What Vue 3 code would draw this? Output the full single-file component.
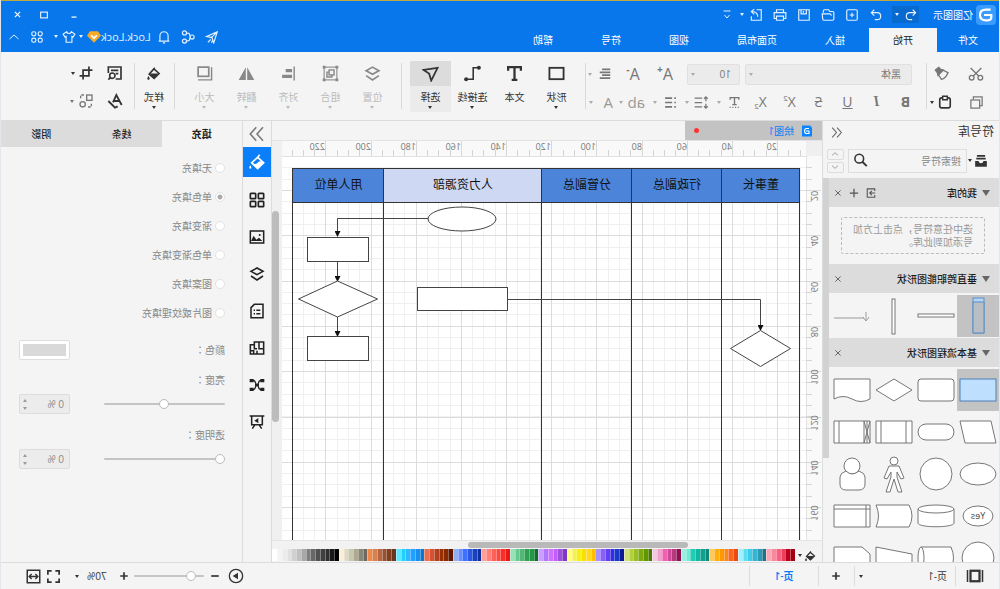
<script setup>
import { h, ref } from 'vue'

const icons = {
  logo: '<path d="M5 4h7c6 0 9 3.500 9 8s-3 8-9 8H9c-3 0-5-2-5-5v-3h11" fill="none" stroke="#fff" stroke-width="3.200"/>',
  undo: '<path d="M9 3L4 8l5 5M4 8h10a6 6 0 0 1 0 12h-4"/>',
  redo: '<path d="M15 3l5 5-5 5M20 8H10a6 6 0 0 0 0 12h4"/>',
  newdoc: '<rect x="3" y="3" width="18" height="18" rx="2"/><path d="M12 8v8M8 12h8"/>',
  open: '<path d="M20 8V5q0-2-2-2h-7L9 6H4q-2 0-2 2v11q0 2 2 2h15q2 0 2-2l1-9H9q-2 0-3 3"/>',
  save: '<path d="M3 3h18v18H3zM8 3v7h9V3M13 5v3"/>',
  print: '<path d="M6 8V3h12v5M6 18H2V8h20v10h-4M6 14h12v7H6z"/>',
  exportdoc: '<path d="M11 3H3v18h17v-7M9 15c0-7 4-9 11-9M15 2l5 4-5 5"/>',
  more: '<path d="M5 4h14M7 12l5 6 5-6"/>',
  min: '<path d="M6 17h12" stroke-width="3"/>',
  max: '<rect x="4" y="5" width="16" height="14" stroke-width="2.500"/>',
  close: '<path d="M5 5l14 14M19 5L5 19" stroke-width="3"/>',
  send: '<path d="M3 3l18 8-9 2-3 9zM4 4l9 9M14 16l5 5M11 18l2 4"/>',
  share: '<circle cx="5" cy="12" r="3.500"/><circle cx="18" cy="5" r="3.500"/><circle cx="18" cy="19" r="3.500"/><path d="M8 11l2-5 5-1M8 13l2 5 5 1"/>',
  bell: '<path d="M3 19h18M5 19V10a7 7 0 0 1 14 0v9M10 22h4"/>',
  diamond: '<path d="M5 2h14l5 8-12 12L0 10z" fill="#f7a928" stroke="none"/><path d="M7 9l5 5 5-5" stroke="#fff" stroke-width="3"/>',
  shirt: '<path d="M8 3c1 4 7 4 8 0l6 4-3 5-2-1v10H7V11l-2 1-3-5z"/>',
  apps: '<rect x="3" y="3" width="7" height="7" rx="3"/><rect x="14" y="3" width="7" height="7" rx="3"/><rect x="3" y="14" width="7" height="7" rx="3"/><rect x="14" y="14" width="7" height="7" rx="3"/>',
  up: '<path d="M3 16l9-8 9 8"/>',
  down: '<path d="M3 8l9 8 9-8"/>',
  cut: '<circle cx="5.500" cy="17.500" r="3.500"/><circle cx="18.500" cy="17.500" r="3.500"/><path d="M4 3l12 12M20 3L8 15"/>',
  painter: '<path d="M3 10l8-4 7 6-5 8c-4-1-8-5-10-10z"/><path d="M10 6l8 8 1-4 3-4-5-4-3 3z" fill="currentColor"/>',
  copy: '<path d="M17 7V3H3v14h4"/><rect x="7" y="8" width="14" height="13"/>',
  paste: '<rect x="3" y="5" width="18" height="17" rx="3" stroke-width="2.800"/><path d="M8 2h8v6H8z" fill="#f4f4f4" stroke-width="2.500"/>',
  align: '<path d="M3 4h14M3 9h18M3 14h14M3 19h18" stroke-width="3"/>',
  textdir: '<path d="M4 7V3h16v4M12 3v13M8 16h8M4 21h2M9 21h2M14 21h2M19 21h2" stroke-width="2.500"/>',
  spacing: '<path d="M11 5h12M11 12h12M11 19h12M5 3v7M5 14v7M2 6l3-3 3 3M2 18l3 3 3-3"/>',
  list: '<path d="M9 4h13M9 12h13M9 20h13M2 4h3M2 12h3M2 20h3" stroke-width="3"/>',
  rect: '<rect x="2" y="4" width="20" height="16" stroke-width="2.600"/>',
  text: '<path d="M3 8V3h18v5M12 3v18M8 21h8" stroke-width="3.200"/>',
  connector: '<path d="M3 4h8v16h9" stroke-width="2.200"/><circle cx="3" cy="4" r="2.800" fill="currentColor" stroke="none"/><circle cx="21" cy="20" r="2.800" fill="currentColor" stroke="none"/>',
  pointer: '<path d="M2 4l20 3-8 5-3 10z" stroke-width="2.500"/>',
  layers: '<path d="M12 3l9 5-9 5-9-5zM3 15l9 6 9-6" stroke-width="2.400"/>',
  group: '<rect x="3" y="3" width="18" height="18" stroke-width="1.500"/><rect x="7" y="7" width="7" height="7"/><path d="M10 14v3h7v-7h-3"/><path d="M1 1h4v4H1zM19 1h4v4h-4zM1 19h4v4H1zM19 19h4v4h-4z" fill="currentColor" stroke="none"/>',
  alignobj: '<path d="M4 2v20" stroke-width="2"/><path d="M7 8h9M7 16h14" stroke-width="4.500"/>',
  flip: '<path d="M11 3v18H1zM13 3v18h10z" fill="currentColor" stroke="none"/>',
  size: '<rect x="6" y="3" width="15" height="13" stroke-width="2.400"/><path d="M2 3v18h19" stroke-width="2"/>',
  bucket: '<path d="M10 3l9 10-8 7-8-8 8-7" stroke-width="2.500"/><path d="M4 12h15l-8 8zM20 16c3 4 2 6 0 6s-3-2 0-6z" fill="currentColor" stroke="none"/>',
  findrep: '<path d="M22 12V3H3v18h8M7 8h11M7 13h4" stroke-width="2.500"/><circle cx="16" cy="16" r="4" stroke-width="2.400"/><path d="M19 19l3 3" stroke-width="2.500"/>',
  textstyle: '<path d="M2 18L10 3l5 11M6 12h8M8 20l4 2 10-10" stroke-width="2.700"/>',
  crop: '<path d="M7 1v16h16M1 7h16v16" stroke-width="2.900"/>',
  replace: '<rect x="3" y="3" width="8" height="8"/><circle cx="17" cy="17" r="4"/><path d="M15 3h5v6M9 21H4v-6" stroke-dasharray="4 2"/>',
  chevl: '<path d="M11 3l-8 9 8 9M20 3l-8 9 8 9"/>',
  chevr: '<path d="M4 3l8 9-8 9M13 3l8 9-8 9"/>',
  drawer: '<path d="M2 12h6c0 5 8 5 8 0h6v10H2z" fill="currentColor" stroke="none"/><path d="M5 3h14M4 8h16" stroke-width="3"/>',
  search: '<circle cx="14" cy="9" r="7" stroke-width="2.500"/><path d="M9 14l-7 7" stroke-width="3"/>',
  importlib: '<path d="M3 7V2h18v20H3v-5M2 12h12M10 7l5 5-5 5" stroke-width="2.600"/>',
  plus: '<path d="M12 2v20M2 12h20" stroke-width="3"/>',
  plusbold: '<path d="M12 3v18M3 12h18" stroke-width="4"/>',
  minus: '<path d="M3 12h18" stroke-width="4"/>',
  x: '<path d="M4 4l16 16M20 4L4 20" stroke-width="2.600"/>',
  fill: '<path d="M11 5l9 8-9 9-9-9 9-8-3-4" stroke-width="2.500"/><path d="M2 13q5-4 9 0t9 0l-9 9zM22 17c2 3 2 5 0 5s-2-2 0-5z" fill="currentColor" stroke="none"/>',
  grid: '<g stroke-width="2.500"><rect x="2" y="2" width="8" height="8" rx="1"/><rect x="14" y="2" width="8" height="8" rx="1"/><rect x="2" y="14" width="8" height="8" rx="1"/><rect x="14" y="14" width="8" height="8" rx="1"/></g>',
  image: '<rect x="2" y="3" width="20" height="18" stroke-width="2.300"/><path d="M4 18l5-5 4 3 4-6 4 8z" fill="currentColor" stroke="none"/><circle cx="8" cy="9" r="1.500" fill="currentColor" stroke="none"/>',
  page: '<path d="M3 2h13l5 5v15H3zM7 11h6M15 11h2M7 16h6M15 16h2" stroke-width="2.300"/>',
  plan: '<path d="M2 3h14v4h6v14H2zM2 13h7V3M16 7v6h-4M12 21v-5M17 21v-5h5" stroke-width="2.300"/>',
  mind: '<path d="M6 5c5 0 3 7 6 7s1-7 6-7M6 19c5 0 3-7 6-7s1 7 6 7" stroke-width="2"/><path d="M1 3h6v5H1zM17 3h6v5h-6zM1 16h6v5H1zM17 16h6v5h-6zM9 10h6v4H9z" fill="currentColor" stroke="none"/>',
  board: '<path d="M1 3h22M4 3v13h16V3M9 16l-4 6M15 16l4 6" stroke-width="2.300"/><path d="M10 6l6 4-6 4z" fill="currentColor" stroke="none"/>',
  pages: '<rect x="6" y="5" width="12" height="14" stroke-width="3"/><path d="M2 4v16M22 4v16" stroke-width="2"/>',
  play: '<circle cx="12" cy="12" r="10"/><path d="M9 7l8 5-8 5z" fill="currentColor" stroke="none"/>',
  full: '<path d="M3 9V3h6M15 3h6v6M21 15v6h-6M9 21H3v-6" stroke-width="2.800"/>',
  fit: '<rect x="2" y="2" width="20" height="20" stroke-width="2.400"/><path d="M6 12h12M9 8l-4 4 4 4M15 8l4 4-4 4" stroke-width="2.200"/>',
  doc: '<path d="M6 1h16v22H2V5z" fill="#0a84ff" stroke="none"/><path d="M8 7h5c5 0 5 10 0 10H8v-5h6" stroke="#fff" stroke-width="2.300"/>',
}
const Icon = (p) =>
  h('svg', {
    viewBox: '0 0 24 24', width: p.size || 14, height: p.size || 14, fill: 'none',
    stroke: 'currentColor', 'stroke-width': 2, 'aria-hidden': 'true', innerHTML: icons[p.name],
  })
Icon.props = ['name', 'size']

const tabs = ['文件', '开始', '插入', '页面布局', '视图', '符号', '帮助']
const quick = ['redo', 'newdoc', 'open', 'save', 'print', 'exportdoc']
const tools = [
  { t: '形状', i: 'rect', c: true }, { t: '文本', i: 'text' },
  { t: '连接线', i: 'connector', c: true }, { t: '选择', i: 'pointer', c: true, on: true },
]
const arrange = [
  { t: '位置', i: 'layers' }, { t: '组合', i: 'group' }, { t: '对齐', i: 'alignobj' },
  { t: '翻转', i: 'flip' }, { t: '大小', i: 'size' },
]
const laneShapes = [
  '<rect x="15" y="3" width="11" height="35" fill="#b4d4f5" stroke="#5b8fc4"/><path d="M15 7h11v31H15z" fill="#b9bec5" stroke="#5b8fc4"/>',
  '<rect x="3" y="19" width="36" height="3"/>',
  '<rect x="20" y="4" width="3" height="35"/>',
  '<path d="M9 23h30M7 17v8M4 22l3 4 3-4" stroke="#999"/>',
]
const flowShapes = [
  '<rect x="3" y="10" width="36" height="22" fill="#bfdfff" stroke="#4c7fb4"/>',
  '<rect x="3" y="10" width="36" height="22" rx="3"/>',
  '<path d="M21 10l18 11-18 11L3 21z"/>',
  '<path d="M3 10h36v20q-9-5-18 0t-18 0z"/>',
  '<path d="M8 10h31l-5 22H3z"/>',
  '<rect x="3" y="13" width="36" height="16" rx="8"/>',
  '<path d="M3 10h36v22H3zM9 10v22M34 10v22"/>',
  '<path d="M3 10h36v22H3zM9 10v22M34 10v22M3 10l6 22M9 10L3 32M6 10v22"/>',
  '<ellipse cx="21" cy="21" rx="18" ry="11"/>',
  '<circle cx="21" cy="21" r="16"/>',
  '<circle cx="21" cy="8" r="4"/><path d="M16 13h10l5 12-3 1-4-7v5l5 15h-4l-4-13-4 13h-4l5-15v-5l-4 7-3-1z"/>',
  '<circle cx="21" cy="13" r="8"/><path d="M14 18q-6 2-6 6v7q0 6 6 6h13q6 0 6-6v-7q0-4-6-6-6 6-13 0z"/>',
  '<ellipse cx="21" cy="21" rx="15" ry="10"/><text x="21" y="24">Yes</text>',
  '<path d="M3 14v14c0 5 36 5 36 0V14"/><ellipse cx="21" cy="14" rx="18" ry="4"/>',
  '<path d="M6 10h33q-5 11 0 22H6q-6-11 0-22z"/>',
  '<path d="M3 10h36v22H3zM3 14h36M7 10v22"/>',
  '<circle cx="21" cy="21" r="16"/>',
  '<path d="M36 10H6q-5 11 0 22h30"/><ellipse cx="36" cy="21" rx="3" ry="11"/>',
  '<path d="M3 17l36-7v22H3z"/>',
  '<path d="M11 10h28v22H3V17z"/>',
]
const lanes = [
  { t: '董事长', x: 200, w: 78 }, { t: '行政副总', x: 278, w: 90 }, { t: '分管副总', x: 368, w: 90 },
  { t: '人力资源部', x: 458, w: 158, light: true }, { t: '用人单位', x: 616, w: 91 },
]
const majors = Array.from({ length: 11 }, (_, i) => ({ n: (i + 1) * 20, x: 222 + Math.round(i * 45.15), y: 190 + Math.round(i * 45.3) }))
const minorX = Array.from({ length: 47 }, (_, i) => Math.round(199.4 + i * 11.29))
const minorY = Array.from({ length: 34 }, (_, i) => Math.round(167.3 + i * 11.32))
const palette = (
  'a3000f c00020 e84058 f76080 f8889c faa8b8 1b7488 2a9ab8 38b4d0 40cce8 60dcf0 a0f0ff f04810 f86820 f88818 ff9800 ffae10 ffc860 ' +
  '0e8878 0fa090 10b8a0 20ccb4 70ead4 98f0e0 901050 b83880 d04898 f060b0 f0a0cc f4c8e0 507800 609800 80a810 98c020 b0d040 d0e080 ' +
  '0c1898 1838c8 3828e8 6040f0 8860f8 a890ff ffc000 ffd820 f8e000 f4f020 f8f050 ffff80 8038c8 a050e0 c060f8 d070ff b078f8 c8a0ff ' +
  '107028 209848 30a050 50b878 68c890 98e0b8 e81818 f83028 ff4840 ff6058 ff8078 ffa098 1030a0 1840c0 2858e8 4070ff 6890ff 90b0f0 ' +
  '601800 882800 983000 b04020 d85030 e87050 0878d0 1890f0 20a0ff 30b8ff 20d0ff 60e8ff 683820 804020 985030 b86840 d88050 f08848 ' +
  '706860 888878 b0a890 c8c8b0 e0d8c0 f8f0d8 000000 181818 303030 404040 505050 686868 808080 a8a8a8 c0c0c0 d0d0d0 e0e0e0 ececec f4f4f4 ffffff'
).split(' ')
const rail = ['fill', 'grid', 'image', 'layers', 'page', 'plan', 'mind', 'board']
const fills = ['无填充', '单色填充', '渐变填充', '单色渐变填充', '图案填充', '图片或纹理填充']
const fillMode = ref('单色填充')
const brightness = ref(50)
const opacity = ref(0)
const zoom = ref(13)
</script>

<template>
  <div class="app">
    <header class="top">
      <div class="titlebar">
        <span class="logo"><Icon name="logo" size="16" /></span>
        <span class="name">亿图图示</span>
        <button class="undo" aria-label="撤销"><Icon name="undo" size="14" /><i class="caret"></i></button>
        <button v-for="q in quick" :key="q" class="quick" :aria-label="q"><Icon :name="q" size="14" /></button>
        <i class="caret"></i>
        <button class="quick more" aria-label="更多"><Icon name="more" size="12" /></button>
        <span class="grow"></span>
        <button class="win" aria-label="最小化"><Icon name="min" size="10" /></button>
        <button class="win" aria-label="最大化"><Icon name="max" size="10" /></button>
        <button class="win" aria-label="关闭"><Icon name="close" size="9" /></button>
      </div>
      <div class="tabbar">
        <nav>
          <button v-for="(t, i) in tabs" :key="t" class="tab" :class="{ first: i === 0, on: i === 1 }">{{ t }}</button>
        </nav>
        <div class="account">
          <button aria-label="发送"><Icon name="send" size="14" /></button>
          <button aria-label="分享"><Icon name="share" size="14" /></button>
          <button aria-label="通知"><Icon name="bell" size="14" /></button>
          <button class="user"><span>Lock.Lock</span><Icon name="diamond" size="14" /><i class="caret"></i></button>
          <button aria-label="主题" class="skin"><Icon name="shirt" size="14" /><i class="caret"></i></button>
          <button aria-label="应用"><Icon name="apps" size="14" /></button>
          <button aria-label="收起"><Icon name="up" size="12" /></button>
        </div>
      </div>
    </header>

    <section class="ribbon">
      <div class="grp clip">
        <button class="ic" aria-label="剪切"><Icon name="cut" size="16" /></button>
        <button class="ic" aria-label="格式刷"><Icon name="painter" size="16" /></button>
        <button class="ic" aria-label="复制"><Icon name="copy" size="15" /></button>
        <button class="ic dark" aria-label="粘贴"><Icon name="paste" size="14" /><i class="caret"></i></button>
      </div>
      <div class="grp font">
        <div class="frow one">
          <span class="sel family"><select aria-label="字体"><option>黑体</option></select><i class="caret"></i></span>
          <span class="sel num"><select aria-label="字号"><option>10</option></select><i class="caret"></i></span>
          <button class="c32 glyph" aria-label="增大字号">A<sup>+</sup></button>
          <button class="c32 glyph" aria-label="减小字号">A<sup>-</sup></button>
          <button class="cc" aria-label="对齐"><Icon name="align" size="14" /><i class="caret"></i></button>
        </div>
        <div class="frow">
          <button class="c29"><b>B</b></button>
          <button class="c29"><em>I</em></button>
          <button class="c29"><u>U</u></button>
          <button class="c29"><s>S</s></button>
          <button class="c29">X<sup>2</sup></button>
          <button class="c29">X<sub>2</sub></button>
          <button class="cc" aria-label="文字方向"><Icon name="textdir" size="13" /><i class="caret"></i></button>
          <button class="cc" aria-label="行距"><Icon name="spacing" size="15" /><i class="caret"></i></button>
          <button class="cc" aria-label="列表"><Icon name="list" size="13" /><i class="caret"></i></button>
          <button class="cc light"><span>ab</span><i class="caret"></i></button>
          <button class="cc light"><span>A</span><i class="caret"></i></button>
        </div>
      </div>
      <div class="grp bigs">
        <button v-for="b in tools" :key="b.t" class="big" :class="{ on: b.on }">
          <span class="pic"><Icon :name="b.i" size="17" /></span><span class="lbl">{{ b.t }}</span><i v-if="b.c" class="caret"></i>
        </button>
      </div>
      <div class="grp bigs off">
        <button v-for="b in arrange" :key="b.t" class="big">
          <span class="pic"><Icon :name="b.i" size="17" /></span><span class="lbl">{{ b.t }}</span><i class="caret"></i>
        </button>
      </div>
      <div class="grp style">
        <button class="big"><span class="pic"><Icon name="bucket" size="15" /></span><span class="lbl">样式</span><i class="caret"></i></button>
      </div>
      <div class="misc">
        <button class="ic dark" aria-label="查找"><Icon name="findrep" size="16" /></button>
        <button class="ic dark" aria-label="裁剪"><Icon name="crop" size="14" /><i class="caret"></i></button>
        <button class="ic dark" aria-label="文本样式"><Icon name="textstyle" size="16" /></button>
        <button class="ic" aria-label="替换"><Icon name="replace" size="16" /><i class="caret"></i></button>
      </div>
    </section>

    <main>
      <aside class="library">
        <div class="libhead"><h2>符号库</h2><button aria-label="收起"><Icon name="chevl" size="13" /></button></div>
        <div class="searchrow">
          <button class="drawer" aria-label="库"><Icon name="drawer" size="14" /><i class="caret"></i></button>
          <label class="searchbox"><input type="text" placeholder="搜索符号" aria-label="搜索符号" /><Icon name="search" size="15" /></label>
          <span class="updown">
            <button aria-label="上"><Icon name="up" size="8" /></button>
            <button aria-label="下"><Icon name="down" size="8" /></button>
          </span>
        </div>
        <div class="libbody">
          <div class="sections">
            <div class="sec"><i class="tri"></i><h3>我的库</h3><Icon name="importlib" size="10" /><Icon name="plus" size="10" /><Icon name="x" size="8" /></div>
            <div class="drop"><p>选中任意符号，点击上方加号添加到此库。</p></div>
            <div class="sec"><i class="tri"></i><h3>垂直跨职能图形状</h3><Icon name="x" size="8" /></div>
            <div class="cells">
              <svg v-for="(s, i) in laneShapes" :key="i" class="cell" :class="{ on: i === 0 }" viewBox="0 0 42 42" v-html="s"></svg>
            </div>
            <div class="sec"><i class="tri"></i><h3>基本流程图形状</h3><Icon name="x" size="8" /></div>
            <div class="cells">
              <svg v-for="(s, i) in flowShapes" :key="i" class="cell" :class="{ on: i === 0 }" viewBox="0 0 42 42" v-html="s"></svg>
            </div>
          </div>
          <div class="libscroll"></div>
        </div>
      </aside>

      <section class="work">
        <div class="docs"><button class="doctab"><Icon name="doc" size="12" /><span>绘图1</span><i class="dot"></i></button></div>
        <div class="stage">
          <svg class="canvas" width="100%" height="100%">
            <defs>
              <marker id="tip" markerWidth="6" markerHeight="6" refX="5" refY="3" orient="auto" markerUnits="userSpaceOnUse">
                <path d="M0 0l6 3-6 3z" fill="#111" />
              </marker>
            </defs>
            <g transform="translate(-178 -141)" shape-rendering="crispEdges">
              <path v-for="x in minorX" :key="'a' + x" :d="`M${x}.5 168V540`" stroke="#f0f0f0" />
              <path v-for="y in minorY" :key="'b' + y" :d="`M194 ${y}.5H720`" stroke="#f0f0f0" />
              <path v-for="m in majors" :key="'c' + m.n" :d="`M${m.x}.5 168V540M194 ${m.y}.5H720`" stroke="#dcdcdc" />
              <path d="M178 141H720V156H194V540H178z" fill="#f9f9f9" />
              <path d="M178 141h16v15h-16z" fill="#efefef" />
              <path d="M194 156.500H720M193.500 156V540" stroke="#e2e2e2" />
              <path v-for="x in minorX" :key="'d' + x" :d="`M${x}.5 150V156`" stroke="#d4d4d4" />
              <path v-for="y in minorY" :key="'e' + y" :d="`M188 ${y}.5H194`" stroke="#d4d4d4" />
              <path v-for="m in majors" :key="'f' + m.n" :d="`M${m.x}.5 141V156M179 ${m.y}.5H194`" stroke="#d8d8d8" />
            </g>
            <g transform="translate(-178 -141)">
              <text v-for="m in majors" :key="'g' + m.n" class="rule" :x="m.x + 1" y="150">{{ m.n }}</text>
              <text v-for="m in majors.slice(0, 8)" :key="'h' + m.n" class="rule mid" :transform="`translate(189 ${m.y + 6}) rotate(-90)`">{{ m.n }}</text>
              <g shape-rendering="crispEdges" stroke="#333" fill="none">
                <g v-for="l in lanes" :key="l.t">
                  <rect :x="l.x + 0.5" y="168.500" :width="l.w" height="34" :fill="l.light ? '#ced8f3' : '#4b84d9'" />
                  <path :d="`M${l.x}.5 202V540M${l.x + l.w}.5 202V540`" />
                </g>
              </g>
              <text v-for="l in lanes" :key="l.t" class="lane" :x="l.x + l.w / 2" y="189">{{ l.t }}</text>
              <g fill="#fff" stroke="#444">
                <path d="M572 218.500H662.500V236" fill="none" marker-end="url(#tip)" />
                <path d="M662.500 262V281" marker-end="url(#tip)" />
                <path d="M662.500 317V336" marker-end="url(#tip)" />
                <path d="M493 299.500H239.500V330" fill="none" marker-end="url(#tip)" />
                <ellipse cx="538" cy="219" rx="34" ry="12" />
                <rect x="631.500" y="237.500" width="61" height="24" />
                <path d="M662.500 281l39 18-39 18-40-18z" />
                <rect x="631.500" y="336.500" width="61" height="24" />
                <rect x="492.500" y="287.500" width="90" height="23" />
                <path d="M239.500 330.500l30 18-30 18-30-18z" />
              </g>
            </g>
          </svg>
          <div class="vbar"><i></i></div>
        </div>
        <div class="hbar"><i></i></div>
        <div class="palette">
          <button class="pbtn" aria-label="填充颜色"><Icon name="bucket" size="12" /><i class="caret"></i></button>
          <div class="strips"><i v-for="(c, i) in palette" :key="i" :style="{ background: '#' + c }"></i></div>
        </div>
      </section>

      <nav class="rail">
        <button class="expand" aria-label="展开"><Icon name="chevr" size="18" /></button>
        <button v-for="(r, i) in rail" :key="r" :class="{ on: i === 0 }" :aria-label="r"><Icon :name="r" size="16" /></button>
      </nav>

      <aside class="props">
        <div class="ptabs"><button class="on">填充</button><button>线条</button><button>阴影</button></div>
        <div class="pbody">
          <label v-for="f in fills" :key="f" class="radio"><input v-model="fillMode" type="radio" name="fill" :value="f" />{{ f }}</label>
          <div class="line color"><span>颜色<span class="colon">：</span></span><button class="swatch" aria-label="颜色"><i></i></button></div>
          <label class="line" for="bright"><span>亮度<span class="colon">：</span></span></label>
          <div class="line ctl">
            <input id="bright" v-model="brightness" type="range" />
            <span class="spin"><input type="text" value="0 %" aria-label="亮度值" /><i class="arrows"></i></span>
          </div>
          <label class="line" for="opac"><span>透明度<span class="colon">：</span></span></label>
          <div class="line ctl">
            <input id="opac" v-model="opacity" type="range" />
            <span class="spin"><input type="text" value="0 %" aria-label="透明度值" /><i class="arrows"></i></span>
          </div>
        </div>
      </aside>
    </main>

    <footer>
      <button class="fpages" aria-label="页面"><Icon name="pages" size="18" /></button>
      <button class="pagesel"><span>页-1</span><i class="caret"></i></button>
      <button class="fadd" aria-label="添加页"><Icon name="plusbold" size="10" /></button>
      <button class="pagetab">页-1</button>
      <span class="grow"></span>
      <button aria-label="播放"><Icon name="play" size="16" /></button>
      <button class="zout" aria-label="缩小"><Icon name="minus" size="10" /></button>
      <input v-model="zoom" class="zoom" type="range" aria-label="缩放" />
      <button class="zin" aria-label="放大"><Icon name="plusbold" size="10" /></button>
      <button class="pct"><span>70%</span><i class="caret"></i></button>
      <button aria-label="全屏"><Icon name="full" size="15" /></button>
      <button class="fit" aria-label="适合宽度"><Icon name="fit" size="15" /></button>
    </footer>
  </div>
</template>

<style>
body { overflow: hidden; }
.cell { fill: #fff; stroke: #777; }
.cell text { font-size: 9px; text-anchor: middle; fill: #444; stroke: none; }
</style>

<style scoped>
.app { transform: scaleX(-1); box-sizing: border-box; height: 100vh; display: flex; flex-direction: column; border: 1px solid #e3e6ea; border-width: 0 1px; background: #f4f4f4; font: 10px/14px "Open Sans", "Noto Sans CJK SC", sans-serif; color: #333; }
.app *, .app *::before { box-sizing: border-box; }
button { border: 0; background: none; padding: 0; margin: 0; font: inherit; color: inherit; display: flex; align-items: center; justify-content: center; }
h2, h3, p { margin: 0; font-weight: 400; }
svg { flex: none; display: block; }
.grow { flex: 1; }
.caret { flex: none; width: 0; height: 0; border: 2px solid transparent; border-top: 3px solid currentColor; border-bottom: 0; }

.top { height: 52px; flex: none; background: #0877ec; border-top: 1px solid #c0a73f; color: #e4f1ff; }
.titlebar { display: flex; align-items: center; height: 27px; padding: 0 6px 0 3px; }
.logo { width: 20px; height: 20px; border-radius: 4px; background: #3b9bff; display: flex; align-items: center; justify-content: center; }
.name { margin: 0 14px 0 3px; color: #fff; }
.undo { height: 17px; padding: 0 3px 0 1px; gap: 5px; background: #0869cf; margin-right: 4px; }
.quick { width: 24px; height: 20px; }
.more { margin-left: 1px; }
.win { width: 30px; height: 20px; color: #fff; }
.win:last-child { width: 22px; }
.tabbar { display: flex; justify-content: space-between; height: 24px; }
nav { display: flex; }
.tab { padding: 0 24px; height: 24px; color: #fff; }
.tab.first { padding: 0 21px; }
.tab.on { background: #f4f4f4; color: #222; }
.account { display: flex; align-items: center; gap: 10px; padding: 0 7px 7px 0; height: 24px; }
.user { gap: 4px; margin: 0 -7px 0 -4px; }
.user span { font-size: 11px; margin-right: -4px; }
.skin { gap: 4px; }

.ribbon { height: 69px; flex: none; display: flex; border-bottom: 1px solid #dcdcdc; color: #777; }
.grp { position: relative; }
.grp::after { content: ""; position: absolute; right: 0; top: 11px; height: 46px; width: 1px; background: #d9d9d9; }
.clip { display: grid; grid-template-columns: 35px 33px; grid-template-rows: 28px 28px; padding: 8px 0 0 5px; }
.misc { display: grid; grid-template-columns: 28px 36px; grid-template-rows: 28px 28px; padding: 7px 0 0 5px; }
.ic { gap: 4px; }
.ic .caret { margin-right: -2px; }
.dark { color: #333; }
.font { padding: 8px 0 0 6px; width: 341px; }
.frow { display: flex; align-items: center; height: 28px; font-size: 14px; }
.frow.one { padding-left: 8px; }
.sel { position: relative; height: 21px; display: block; color: #888; }
.sel select { appearance: none; width: 100%; height: 21px; border: 1px solid #e0e0e0; border-radius: 2px; background: #ebebeb; color: #777; font: 10px/14px "Open Sans", "Noto Sans CJK SC", sans-serif; padding: 0 8px; }
.sel.family select { padding: 0 10px; }
.sel .caret { position: absolute; right: 4px; top: 9px; color: #aaa; }
.family { width: 167px; margin-right: 5px; }
.num { width: 53px; margin-right: 6px; }
.c32 { width: 32px; height: 24px; }
.glyph { font-size: 16px; font-weight: 500; }
sup, sub { font-size: 8px; line-height: 8px; }
sup { align-self: flex-start; margin-top: 4px; }
sub { align-self: flex-end; margin-bottom: 4px; }
.glyph sup { font-size: 10px; font-weight: 700; margin-top: 3px; }
.c29 { width: 29px; height: 24px; }
.c29 em { font-family: "Liberation Serif", serif; font-weight: 700; }
.cc { width: 32px; height: 24px; gap: 4px; justify-content: flex-start; padding-left: 5px; }
.cc .caret { margin-left: auto; margin-right: 3px; color: #aaa; }
.light { color: #999; }
.light span { font-size: 15px; }
.bigs { display: flex; gap: 1px; padding: 9px 9px 0 8px; color: #333; }
.off { color: #bbb; padding-right: 10px; }
.off .pic { color: #888; }
.big { flex-direction: column; justify-content: flex-start; width: 41px; height: 51px; }
.big .pic { width: 100%; height: 25px; display: flex; align-items: center; justify-content: center; }
.big .lbl { line-height: 14px; margin: 4px 0 2px; white-space: nowrap; }
.big.on { background: #ebebeb; }
.big.on .pic { background: #dcdcdc; }
.style { padding: 9px 0 0; color: #333; }
.style .big { width: 40px; }

main { flex: 1; min-height: 0; display: flex; }
.library { width: 177px; flex: none; display: flex; flex-direction: column; border-right: 1px solid #dcdcdc; }
.libhead { display: flex; justify-content: space-between; align-items: center; height: 22px; padding: 0 7px 0 5px; color: #666; }
.libhead h2 { font-size: 12px; color: #333; }
.searchrow { display: flex; align-items: center; height: 35px; flex: none; padding: 0 4px 0 10px; }
.drawer { gap: 2px; color: #333; width: 22px; }
.searchbox { flex: 1; display: flex; align-items: center; height: 24px; border: 1px solid #dedede; padding: 0 4px 0 5px; color: #333; min-width: 0; }
.searchbox input { flex: 1; min-width: 0; border: 0; background: none; font: inherit; padding: 0; outline: 0; }
.searchbox input::placeholder { color: #888; }
.updown { display: flex; flex-direction: column; gap: 2px; margin-left: 4px; }
.updown button { width: 17px; height: 11px; border: 1px solid #dcdcdc; border-radius: 2px; color: #777; }
.libbody { flex: 1; min-height: 0; display: flex; }
.sections { flex: 1; overflow: hidden; }
.libscroll { width: 6px; background: linear-gradient(#d2d2d2, #d2d2d2) no-repeat 0 0 / 6px 280px; }
.sec { display: flex; align-items: center; height: 29px; background: #dcdcdc; padding: 0 5px 0 9px; gap: 7px; color: #555; }
.sec h3 { font-size: 10px; font-weight: 500; color: #1c1c1c; flex: 1; margin-left: -2px; white-space: nowrap; }
.tri { border: 4px solid transparent; border-top: 6px solid #666; border-bottom: 0; }
.drop { margin: 10px 12px 10px 14px; height: 37px; border: 1px dashed #bbb; border-radius: 2px; padding: 5px 8px 0 11px; color: #999; }
.drop p { line-height: 13px; }
.cells { display: grid; grid-template-columns: repeat(4, 42px); grid-auto-rows: 42px; padding: 2px 0 1px; }
.cell { width: 42px; height: 42px; }
.cell.on { background: #c3c3c3; }

.work { flex: 1; min-width: 0; display: flex; flex-direction: column; }
.docs { height: 20px; flex: none; border-bottom: 1px solid #e4e4e4; display: flex; }
.doctab { width: 137px; background: #c3c3c3; color: #0a7ff5; padding: 0 9px; gap: 7px; }
.dot { width: 5px; height: 5px; border-radius: 50%; background: #f33; margin-left: auto; }
.stage { flex: 1; min-height: 0; display: flex; background: #fff; }
.canvas { flex: 1; min-width: 0; }
.rule { font-size: 9px; fill: #777; }
.mid { text-anchor: middle; }
.lane { font-size: 12px; fill: #111; text-anchor: middle; }
.vbar { width: 10px; background: #f0f0f0; padding: 70px 0 0 3px; }
.vbar i { display: block; height: 211px; width: 7px; border-radius: 4px; background: #bcbcbc; }
.hbar { height: 9px; flex: none; background: #f2f2f2; border-top: 1px solid #e4e4e4; padding: 1px 0 0 134px; }
.hbar i { display: block; width: 220px; height: 6px; border-radius: 3px; background: #b9b9b9; }
.palette { height: 13px; flex: none; display: flex; }
.pbtn { width: 27px; gap: 2px; padding-left: 3px; color: #333; }
.strips { flex: 1; display: flex; height: 12px; }
.strips i { flex: 1; border-right: 1px solid rgba(255, 255, 255, .35); }

.rail { width: 30px; flex: none; display: flex; flex-direction: column; border: 1px solid #dcdcdc; border-width: 0 1px; color: #222; gap: 7px; }
.rail button { height: 30px; flex: none; }
.rail .expand { height: 26px; color: #777; margin-bottom: -7px; }
.rail .on { background: #0a7ff9; color: #fff; margin-bottom: 1px; }

.props { width: 241px; flex: none; }
.ptabs { display: grid; grid-template-columns: repeat(3, 1fr); height: 26px; background: #dcdcdc; }
.ptabs button { font-weight: 500; color: #222; }
.ptabs .on { background: #f4f4f4; font-weight: 700; }
.pbody { padding: 6px 18px 0 17px; color: #888; }
.radio { display: flex; align-items: center; gap: 3px; height: 29px; }
.radio input { appearance: none; width: 10px; height: 10px; margin: 0; border: 1px solid #e2e2e2; border-radius: 50%; background: #fff; }
.radio input:checked { background: radial-gradient(circle, #aaa 2px, #fff 3px); }
.line { display: flex; align-items: center; justify-content: space-between; height: 24px; }
.line.color { height: 30px; margin: 8px 0 3px; }
.line.ctl { margin-bottom: 7px; }
.colon { font-family: "Noto Sans CJK TC", sans-serif; line-height: 10px; }
.swatch { width: 51px; height: 20px; border: 1px solid #ddd; border-radius: 2px; background: #fff; padding: 3px; }
.swatch i { width: 100%; height: 100%; background: #d9d9d9; }
.spin { display: flex; align-items: center; width: 51px; height: 20px; border: 1px solid #dcdcdc; border-radius: 2px; background: #ececec; padding: 0 3px 0 5px; }
.spin input { flex: 1; min-width: 0; border: 0; padding: 0; background: none; font: inherit; color: #888; }
.arrows { display: flex; flex-direction: column; gap: 5px; }
.arrows::before, .arrows::after { content: ""; border: 2px solid transparent; border-top: 0; border-bottom: 3px solid #999; }
.arrows::after { border-top: 3px solid #999; border-bottom: 0; }
input[type="range"] { appearance: none; background: none; width: 121px; height: 12px; margin: 0; }
input[type="range"]::-webkit-slider-runnable-track { height: 2px; background: #c4c4c4; border-radius: 1px; }
input[type="range"]::-webkit-slider-thumb { appearance: none; width: 10px; height: 10px; margin-top: -4px; border: 1px solid #bbb; border-radius: 50%; background: #fff; }

footer { height: 27px; flex: none; display: flex; align-items: center; border-top: 1px solid #dcdcdc; color: #333; }
footer button { height: 20px; }
.fpages { width: 44px; border-right: 1px solid #dcdcdc; padding-left: 4px; }
.pagesel { width: 101px; justify-content: space-between; padding: 0 4px 0 8px; border-right: 1px solid #dcdcdc; }
.fadd { width: 36px; border-right: 1px solid #dcdcdc; }
.pagetab { width: 69px; color: #0a7ff5; font-weight: 600; border-right: 1px solid #dcdcdc; }
.zout { margin: 0 6px 0 8px; }
footer .zoom { width: 70px; }
.zin { margin: 0 12px 0 5px; }
.pct { gap: 8px; margin-right: 14px; }
.fit { margin: 0 25px 0 5px; }
</style>
